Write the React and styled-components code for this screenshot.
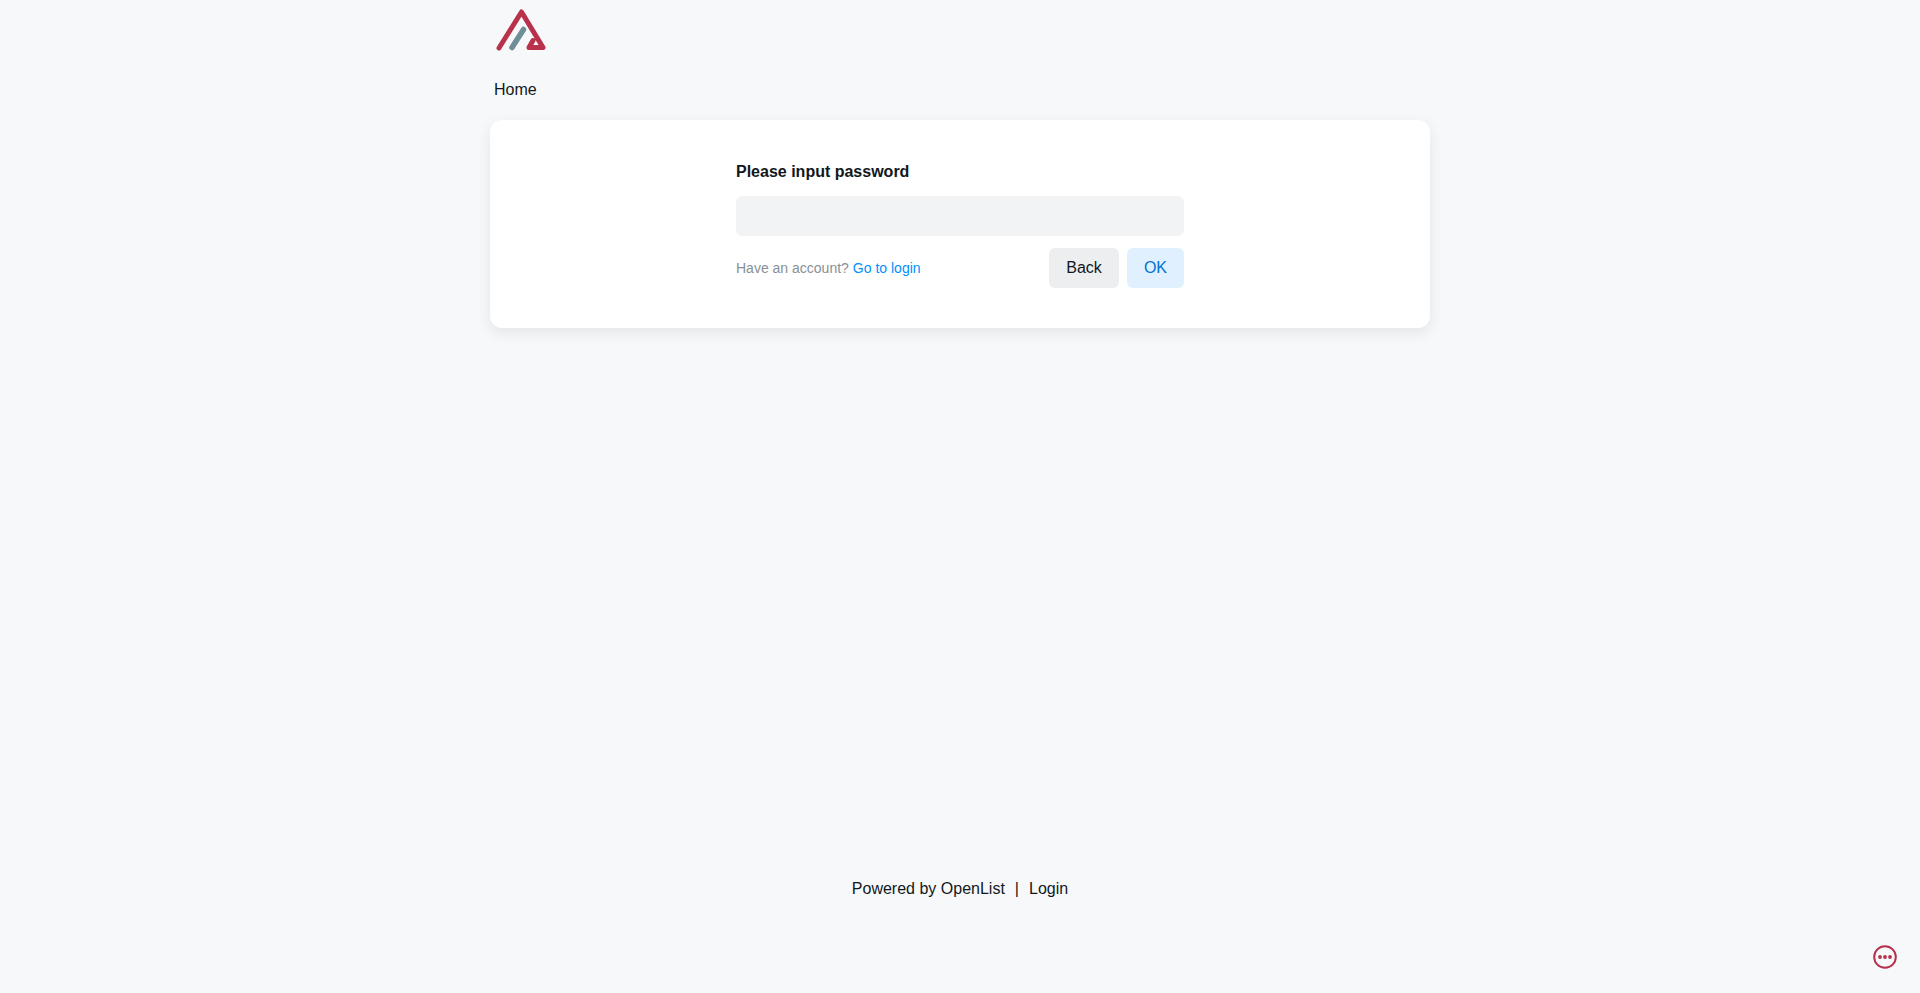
import React from "react";
import styled, { createGlobalStyle } from "styled-components";

const GlobalStyle = createGlobalStyle`
  * { box-sizing: border-box; }
  html, body { margin: 0; padding: 0; }
  body {
    background-color: #f7f8fa;
    color: #11181c;
    font-family: "Liberation Sans", Arial, sans-serif;
    font-size: 16px;
    line-height: 24px;
  }
`;

const Page = styled.div`
  min-height: 100vh;
  display: flex;
  flex-direction: column;
  align-items: center;
`;

const Column = styled.div`
  width: 940px;
  display: flex;
  flex-direction: column;
`;

const Header = styled.header`
  height: 60px;
  display: flex;
  align-items: flex-start;
  padding: 6px 0 0 5px;
`;

const Crumbs = styled.nav`
  height: 60px;
  display: flex;
  align-items: center;
  padding-left: 4px;
  color: #11181c;
`;

const Card = styled.main`
  height: 208px;
  background: #fff;
  border-radius: 12px;
  box-shadow: 0 5px 15px rgba(0, 0, 0, 0.08);
  display: flex;
  justify-content: center;
  padding-top: 40px;
`;

const Form = styled.div`
  width: 448px;
  display: flex;
  flex-direction: column;
`;

const Title = styled.h2`
  margin: 0;
  font-size: 16px;
  line-height: 24px;
  font-weight: 700;
  color: #11181c;
`;

const PasswordInput = styled.input`
  height: 40px;
  margin-top: 12px;
  border: 0;
  outline: 0;
  border-radius: 6px;
  background: #f1f3f5;
  padding: 0 16px;
  font: inherit;
`;

const Row = styled.div`
  margin-top: 12px;
  display: flex;
  align-items: center;
  justify-content: space-between;
`;

const Hint = styled.p`
  margin: 0;
  display: flex;
  gap: 4px;
  font-size: 14px;
  line-height: 20px;
  color: #889096;
`;

const LoginLink = styled.a`
  color: #0091ff;
  text-decoration: none;
`;

const Buttons = styled.div`
  display: flex;
  gap: 8px;
`;

const Button = styled.button`
  height: 40px;
  border: 0;
  border-radius: 6px;
  padding: 0 17px;
  font: inherit;
  color: ${(p) => (p.$primary ? "#0072d0" : "#11181c")};
  background: ${(p) => (p.$primary ? "#e1f0ff" : "#eceef0")};
`;

const Footer = styled.footer`
  margin-top: auto;
  padding-bottom: 92px;
  display: flex;
  gap: 10px;
  color: #11181c;
`;

const FloatingButton = styled.div`
  position: fixed;
  right: 23px;
  bottom: 24px;
  width: 24px;
  height: 24px;
  color: #b5324c;
`;

function Logo() {
  return (
    <svg width="52" height="48" viewBox="0 0 52 48" fill="none" strokeLinecap="round" strokeLinejoin="round">
      <path d="M4 42 L26.5 6 L48 41.5 L34 41.5 L38 34.5" stroke="#b8324c" strokeWidth="5" />
      <path d="M28.5 23.5 L17 41.5" stroke="#6f8f98" strokeWidth="5.5" />
    </svg>
  );
}

export default function App() {
  return (
    <Page>
      <GlobalStyle />
      <Column>
        <Header>
          <Logo />
        </Header>
        <Crumbs>Home</Crumbs>
        <Card>
          <Form>
            <Title>Please input password</Title>
            <PasswordInput type="password" />
            <Row>
              <Hint>
                Have an account?
                <LoginLink href="#">Go to login</LoginLink>
              </Hint>
              <Buttons>
                <Button>Back</Button>
                <Button $primary>OK</Button>
              </Buttons>
            </Row>
          </Form>
        </Card>
      </Column>
      <Footer>
        <span>Powered by OpenList</span>
        <span>|</span>
        <span>Login</span>
      </Footer>
      <FloatingButton>
        <svg width="24" height="24" viewBox="0 0 24 24" fill="none">
          <circle cx="12" cy="12" r="10.8" stroke="currentColor" strokeWidth="2" />
          <circle cx="7" cy="12" r="1.9" fill="currentColor" />
          <circle cx="12" cy="12" r="1.9" fill="currentColor" />
          <circle cx="17" cy="12" r="1.9" fill="currentColor" />
        </svg>
      </FloatingButton>
    </Page>
  );
}
